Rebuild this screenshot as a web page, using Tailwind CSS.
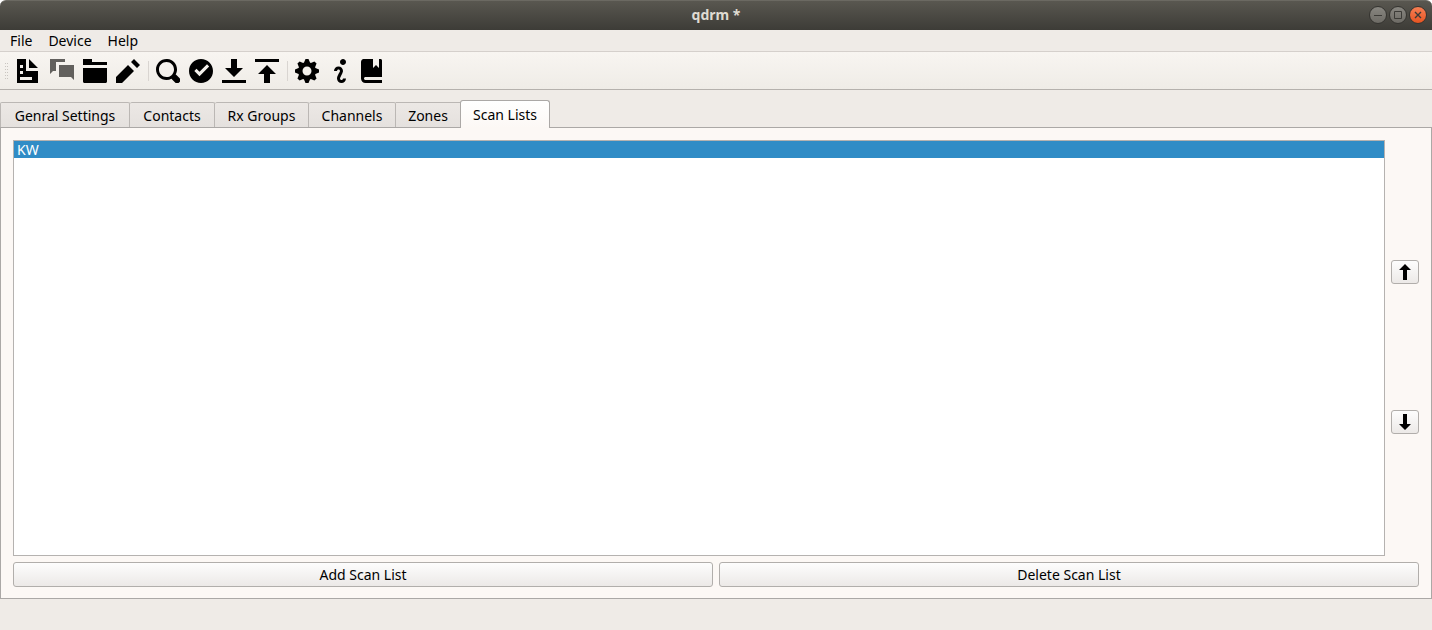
<!DOCTYPE html>
<html lang="en">
<head>
    <meta charset="UTF-8">
    <meta name="viewport" content="width=device-width, initial-scale=1.0">
    <title>qdrm *</title>
    <script src="https://cdn.jsdelivr.net/npm/@tailwindcss/browser@4"></script>
</head>
<body class="bg-white">
    <div class="flex flex-col min-h-screen bg-[#efebe7] text-black text-sm font-['Noto_Sans','Open_Sans',sans-serif]">
        <!-- Title bar -->
        <div class="bg-white">
            <header class="grid grid-cols-[1fr_auto_1fr] items-center h-[30px] px-1 pb-[2px] rounded-t-md border-t border-[#6b6962] bg-linear-to-b from-[#595750] to-[#3d3c37]">
                <span></span>
                <h1 class="text-sm font-bold text-[#dfdbd2]">qdrm *</h1>
                <div class="flex justify-end gap-[2px] px-px">
                    <button aria-label="Minimize" class="size-[18px] rounded-full border border-[#353430] bg-linear-to-b from-[#888680] to-[#6d6b65]">
                        <svg class="size-4" viewBox="0 0 16 16" fill="none" stroke="#3c3b37"><path d="M4 8.5h8"/></svg>
                    </button>
                    <button aria-label="Maximize" class="size-[18px] rounded-full border border-[#353430] bg-linear-to-b from-[#888680] to-[#6d6b65]">
                        <svg class="size-4" viewBox="0 0 16 16" fill="none" stroke="#3c3b37"><path d="M4.5 4.5h7v7h-7z"/></svg>
                    </button>
                    <button aria-label="Close" class="size-[18px] rounded-full border border-[#353430] bg-linear-to-b from-[#f67e53] to-[#e6541f]">
                        <svg class="size-4" viewBox="0 0 16 16" fill="none" stroke="#3c3b37" stroke-width="1.4"><path d="M5 5l6 6m0-6l-6 6"/></svg>
                    </button>
                </div>
            </header>
        </div>

        <!-- Menu -->
        <nav class="flex items-center h-[22px] gap-4 px-[10px] border-b border-[#d5d0cc]">
            <a href="#">File</a>
            <a href="#">Device</a>
            <a href="#">Help</a>
        </nav>

        <!-- Toolbar -->
        <div class="flex items-center h-[38px] gap-[9px] pl-1 border-b border-[#b5b1ad] bg-linear-to-b from-[#f8f5f1] to-[#efece7]">
            <svg class="w-1 h-[18px]" viewBox="0 0 4 18" fill="none" stroke="#c9c5c0" stroke-dasharray="1 2"><path d="M1.5 1v17M3.5 1v17"/></svg>
            <button aria-label="New"><svg class="size-6" viewBox="0 0 8 8"><path d="M0 0v8h7v-4h-4v-4h-3zm4 0v3h3l-3-3zm-3 2h1v1h-1v-1zm0 2h1v1h-1v-1zm0 2h4v1h-4v-1z"/></svg></button>
            <button aria-label="Messages" disabled><svg class="size-6" viewBox="0 0 8 8" fill="#62605d"><path d="M0 0v5l1-1h1v-3h3v-1h-5zm3 2v4h4l1 1v-5h-5z"/></svg></button>
            <button aria-label="Open"><svg class="size-6" viewBox="0 0 8 8"><path d="M0 0v2h8v-1h-5v-1h-3zm0 3v4.5c0 .28.22.5.5.5h7c.28 0 .5-.22.5-.5v-4.5h-8z"/></svg></button>
            <button aria-label="Edit"><svg class="size-6" viewBox="0 0 8 8"><path d="M6 0l-1 1 2 2 1-1-2-2zm-2 2l-4 4v2h2l4-4-2-2z"/></svg></button>
            <div class="-ml-px -mr-[2px] w-px h-5 bg-[#d9d5d1]"></div>
            <button aria-label="Detect"><svg class="size-6" viewBox="0 0 8 8"><path d="M3.5 0c-1.93 0-3.5 1.57-3.5 3.5s1.57 3.5 3.5 3.5c.59 0 1.17-.14 1.66-.41a1 1 0 0 0 .13.13l1 1a1.02 1.02 0 1 0 1.44-1.44l-1-1a1 1 0 0 0-.16-.13c.27-.49.44-1.06.44-1.66 0-1.93-1.55-3.5-3.5-3.5zm0 1c1.39 0 2.5 1.11 2.5 2.5 0 .66-.24 1.27-.66 1.72-.01.01-.02.02-.03.03a1 1 0 0 0-.13.13c-.44.4-1.04.63-1.69.63-1.39 0-2.5-1.11-2.5-2.5s1.11-2.5 2.5-2.5z"/></svg></button>
            <button aria-label="Verify"><svg class="size-6" viewBox="0 0 8 8"><path d="M4 0c-2.2 0-4 1.8-4 4s1.8 4 4 4 4-1.8 4-4-1.8-4-4-4zm2 1.78l.72.72-3.22 3.22-1.72-1.72.72-.72 1 1 2.5-2.5z"/></svg></button>
            <button aria-label="Download"><svg class="size-6" viewBox="0 0 8 8"><path d="M3 0v3h-2l3 3 3-3h-2v-3h-2zm-3 7v1h8v-1h-8z"/></svg></button>
            <button aria-label="Upload"><svg class="size-6" viewBox="0 0 8 8"><path d="M0 0v1h8v-1h-8zm4 2l-3 3h2v3h2v-3h2l-3-3z"/></svg></button>
            <div class="-ml-px -mr-[2px] w-px h-5 bg-[#d9d5d1]"></div>
            <button aria-label="Settings"><svg class="size-6" viewBox="0 0 8 8"><path d="M3.5 0l-.5 1.19c-.1.03-.19.08-.28.13l-1.19-.5-.72.72.5 1.19c-.05.1-.09.18-.13.28l-1.19.5v1l1.19.5c.04.1.08.18.13.28l-.5 1.19.72.72 1.19-.5c.09.04.18.09.28.13l.5 1.19h1l.5-1.19c.09-.04.19-.08.28-.13l1.19.5.72-.72-.5-1.19c.04-.09.09-.19.13-.28l1.19-.5v-1l-1.19-.5c-.03-.09-.08-.19-.13-.28l.5-1.19-.72-.72-1.19.5c-.09-.04-.19-.09-.28-.13l-.5-1.19h-1zm.5 2.5c.83 0 1.5.67 1.5 1.5s-.67 1.5-1.5 1.5-1.5-.67-1.5-1.5.67-1.5 1.5-1.5z"/></svg></button>
            <button aria-label="About"><svg class="size-6" viewBox="0 0 8 8"><path transform="translate(2)" d="M3 0c-.55 0-1 .45-1 1s.45 1 1 1 1-.45 1-1-.45-1-1-1zm-1.5 2.5c-.83 0-1.5.67-1.5 1.5h1c0-.28.22-.5.5-.5s.5.22.5.5-1 1.64-1 2.5c0 .86.67 1.5 1.5 1.5s1.5-.67 1.5-1.5h-1c0 .28-.22.5-.5.5s-.5-.22-.5-.5c0-.36 1-1.84 1-2.5 0-.81-.67-1.5-1.5-1.5z"/></svg></button>
            <button aria-label="Manual"><svg class="size-6" viewBox="0 0 8 8"><path d="M1 0c-.07 0-.13.01-.19.03-.39.08-.7.39-.78.78-.03.06-.03.12-.03.19v5.5c0 .83.67 1.5 1.5 1.5h5.5v-1h-5.5c-.28 0-.5-.22-.5-.5s.22-.5.5-.5h5.5v-5.5c0-.28-.22-.5-.5-.5h-.5v3l-1-1-1 1v-3h-3z"/></svg></button>
        </div>

        <!-- Tabs -->
        <div role="tablist" class="flex items-end pt-[10px]">
            <button role="tab" class="w-[130px] h-[25px] pt-[2px] border border-b-0 border-[#bbb7b4] rounded-t-xs bg-linear-to-b from-[#ece8e5] to-[#e5e1de]">Genral Settings</button>
            <button role="tab" class="w-[85px] h-[25px] pt-[2px] border border-l-0 border-b-0 border-[#bbb7b4] rounded-t-xs bg-linear-to-b from-[#ece8e5] to-[#e5e1de]">Contacts</button>
            <button role="tab" class="w-[94px] h-[25px] pt-[2px] border border-l-0 border-b-0 border-[#bbb7b4] rounded-t-xs bg-linear-to-b from-[#ece8e5] to-[#e5e1de]">Rx Groups</button>
            <button role="tab" class="w-[87px] h-[25px] pt-[2px] border border-l-0 border-b-0 border-[#bbb7b4] rounded-t-xs bg-linear-to-b from-[#ece8e5] to-[#e5e1de]">Channels</button>
            <button role="tab" class="w-16 h-[25px] pt-[2px] border border-x-0 border-b-0 border-[#bbb7b4] bg-linear-to-b from-[#ece8e5] to-[#e5e1de]">Zones</button>
            <button role="tab" aria-selected="true" class="relative z-10 w-[90px] h-7 -mb-px border border-b-0 border-[#aba8a6] rounded-t-[3px] bg-linear-to-b from-white to-[#fcf8f5]">Scan Lists</button>
        </div>

        <!-- Scan lists -->
        <main role="tabpanel" class="flex-1 flex flex-col gap-[6px] p-3 pb-[11px] mb-[31px] border border-[#aba8a6] bg-[#fcf8f5]">
            <div class="flex-1 flex gap-[6px]">
                <ul role="listbox" aria-label="Scan lists" class="flex-1 border border-[#b5b2b0] bg-white">
                    <li role="option" aria-selected="true" class="px-[3px] bg-[#308cc6] leading-[17px] text-white">KW</li>
                </ul>
                <div class="flex flex-col justify-center gap-[126px] pb-[2px]">
                    <button aria-label="Move up" class="flex items-center justify-center w-7 h-6 border border-[#b1aeab] rounded-[3px] bg-linear-to-b from-[#fdfdfd] to-[#ece9e7]">
                        <svg class="size-4" viewBox="0 0 8 8"><path d="M4 0l-3 3h2v5h2v-5h2l-3-3z"/></svg>
                    </button>
                    <button aria-label="Move down" class="flex items-center justify-center w-7 h-6 border border-[#b1aeab] rounded-[3px] bg-linear-to-b from-[#fdfdfd] to-[#ece9e7]">
                        <svg class="size-4" viewBox="0 0 8 8"><path d="M3 0v5h-2l3 3 3-3h-2v-5h-2z"/></svg>
                    </button>
                </div>
            </div>
            <div class="grid grid-cols-2 gap-[6px]">
                <button class="h-[25px] border border-[#b1aeab] rounded-[3px] bg-linear-to-b from-[#fdfdfd] to-[#ece9e7]">Add Scan List</button>
                <button class="h-[25px] border border-[#b1aeab] rounded-[3px] bg-linear-to-b from-[#fdfdfd] to-[#ece9e7]">Delete Scan List</button>
            </div>
        </main>
    </div>
</body>
</html>
